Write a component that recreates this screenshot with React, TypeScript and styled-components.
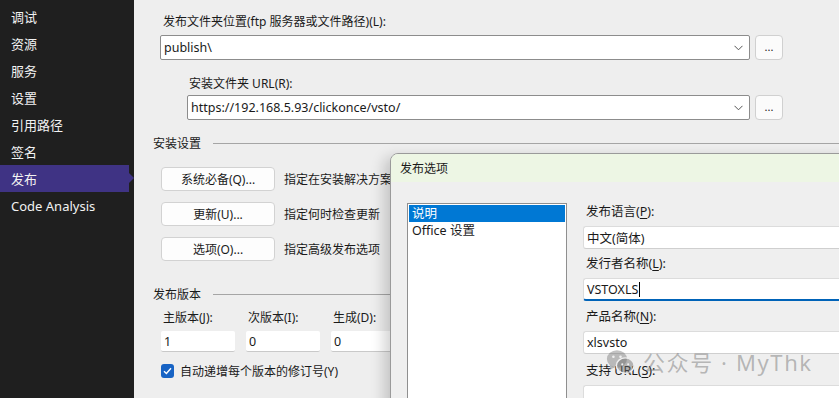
import React from "react";
import styled, { createGlobalStyle } from "styled-components";

const Global = createGlobalStyle`
  html, body { margin: 0; padding: 0; width: 839px; height: 398px; overflow: hidden; background: #eeeeee; }
  * { box-sizing: border-box; }
  body { font-family: "Noto Sans", "Noto Sans CJK SC", sans-serif; font-size: 12px; color: #1a1a1a; }
`;

const Page = styled.div`
  display: flex;
  width: 839px;
  height: 398px;
  overflow: hidden;
`;

const Sidebar = styled.nav`
  width: 134px;
  flex: none;
  background: #1f1f1f;
  display: flex;
  flex-direction: column;
  padding-top: 3px;
`;

const NavItem = styled.div<{ $active?: boolean }>`
  position: relative;
  height: 27px;
  width: 129px;
  display: flex;
  align-items: center;
  padding-left: 11px;
  font-size: 13px;
  color: #f2f2f2;
  background: ${(p) => (p.$active ? "#3f3384" : "transparent")};
  &::after {
    content: "";
    display: ${(p) => (p.$active ? "block" : "none")};
    position: absolute;
    right: -5px;
    top: 8px;
    border-left: 5px solid #3f3384;
    border-top: 5px solid transparent;
    border-bottom: 5px solid transparent;
  }
`;

const Main = styled.main`
  position: relative;
  flex: 1;
  background: #eeeeee;
  padding: 14px 0 0 19px;
  display: flex;
  flex-direction: column;
`;

const FieldLabel = styled.div<{ $indent: number; $top?: number }>`
  margin-left: ${(p) => p.$indent}px;
  margin-top: ${(p) => p.$top ?? 0}px;
  height: 16px;
  line-height: 16px;
`;

const PathRow = styled.div<{ $indent: number; $top: number }>`
  display: flex;
  align-items: center;
  gap: 5px;
  margin-left: ${(p) => p.$indent}px;
  margin-top: ${(p) => p.$top}px;
`;

const Combo = styled.div<{ $w: number }>`
  width: ${(p) => p.$w}px;
  height: 25px;
  background: #ffffff;
  border: 1px solid #8c8c8c;
  border-radius: 2px;
  display: flex;
  align-items: center;
  justify-content: space-between;
  padding: 0 6px 0 3px;
  font-size: 12.5px;
`;

const Browse = styled.div`
  width: 28px;
  height: 25px;
  border: 1px solid #d0d0d0;
  border-radius: 4px;
  background: #fbfbfb;
  display: flex;
  align-items: center;
  justify-content: center;
  font-size: 11px;
  padding-bottom: 3px;
`;

const SectionHead = styled.div<{ $top: number }>`
  display: flex;
  align-items: center;
  gap: 12px;
  margin-top: ${(p) => p.$top}px;
  height: 16px;
  font-size: 12px;
  &::after {
    content: "";
    flex: 1;
    height: 1px;
    background: #a5a5a5;
  }
`;

const ActionList = styled.div`
  display: flex;
  flex-direction: column;
  gap: 11px;
  margin: 16px 0 0 8px;
`;

const ActionRow = styled.div`
  display: flex;
  align-items: center;
  gap: 9px;
`;

const ActionButton = styled.div`
  width: 114px;
  height: 24px;
  background: #fdfdfd;
  border: 1px solid #d2d2d2;
  border-radius: 4px;
  display: flex;
  align-items: center;
  justify-content: center;
`;

const Desc = styled.span`
  white-space: nowrap;
`;

const VersionGrid = styled.div`
  display: grid;
  grid-template-columns: repeat(3, 74px);
  column-gap: 11px;
  row-gap: 5px;
  margin: 8px 0 0 8px;
`;

const VersionLabel = styled.div`
  padding-left: 2px;
  height: 16px;
  line-height: 16px;
`;

const VersionInput = styled.div`
  height: 21px;
  background: #ffffff;
  border-bottom: 1px solid #c9c9c9;
  border-radius: 2px;
  padding-left: 3px;
  display: flex;
  align-items: center;
  font-size: 12.5px;
`;

const CheckRow = styled.div`
  display: flex;
  align-items: center;
  gap: 6px;
  margin: 10px 0 0 8px;
`;

const CheckBox = styled.div`
  width: 13px;
  height: 14px;
  border-radius: 3px;
  background: #1763c4;
  display: flex;
  align-items: center;
  justify-content: center;
`;

const Dialog = styled.section`
  position: absolute;
  left: 256px;
  top: 153px;
  width: 470px;
  height: 300px;
  background: #efefef;
  border: 1px solid #9a9a9a;
  border-radius: 8px 0 0 0;
  box-shadow: -6px 4px 14px rgba(0, 0, 0, 0.18);
  display: flex;
  flex-direction: column;
  overflow: hidden;
`;

const TitleBar = styled.div`
  flex: none;
  height: 28px;
  background: #edf6e4;
  padding-left: 9px;
  display: flex;
  align-items: center;
  font-size: 12px;
`;

const DialogBody = styled.div`
  position: relative;
  flex: 1;
  display: flex;
  align-items: flex-start;
  padding: 21px 0 0 16px;
  gap: 16px;
`;

const ListBox = styled.div`
  flex: none;
  width: 160px;
  height: 240px;
  background: #ffffff;
  border: 1px solid #8f8f8f;
  padding: 1px;
  display: flex;
  flex-direction: column;
`;

const ListItem = styled.div<{ $selected?: boolean }>`
  height: 17px;
  line-height: 17px;
  padding-left: 3px;
  font-size: 12.5px;
  background: ${(p) => (p.$selected ? "#0078d4" : "transparent")};
  color: ${(p) => (p.$selected ? "#ffffff" : "#1a1a1a")};
`;

const FormCol = styled.div`
  flex: 1;
  display: flex;
  flex-direction: column;
`;

const FormLabel = styled.div<{ $top: number }>`
  margin-top: ${(p) => p.$top}px;
  padding-left: 3px;
  height: 16px;
  line-height: 16px;
  font-size: 12.5px;
  u { text-underline-offset: 2px; }
`;

const FormInput = styled.div<{ $focused?: boolean }>`
  margin-top: 6px;
  height: 23px;
  background: #ffffff;
  border: 1px solid #dcdcdc;
  border-bottom: ${(p) => (p.$focused ? "2px solid #0063b8" : "1px solid #cfcfcf")};
  border-right: none;
  border-radius: 3px 0 0 3px;
  padding-left: 3px;
  display: flex;
  align-items: center;
  font-size: 12.5px;
`;

const Caret = styled.span`
  display: inline-block;
  width: 1px;
  height: 15px;
  background: #000;
  margin-left: 1px;
`;

const Watermark = styled.div`
  position: absolute;
  left: 214px;
  top: 167px;
  display: flex;
  align-items: center;
  gap: 7px;
  color: rgba(110, 110, 110, 0.45);
  font-size: 22px;
  line-height: 26px;
  letter-spacing: 1.6px;
  pointer-events: none;
  white-space: nowrap;
`;

const Chevron = () => (
  <svg width="9" height="6" viewBox="0 0 9 6">
    <path d="M0.5 0.8 L4.5 4.8 L8.5 0.8" fill="none" stroke="#555" strokeWidth="1" />
  </svg>
);

const Check = () => (
  <svg width="9" height="8" viewBox="0 0 9 8">
    <path d="M1 4.2 L3.4 6.5 L8 1.3" fill="none" stroke="#fff" strokeWidth="1.4" />
  </svg>
);

const WeChat = () => (
  <svg width="31" height="26" viewBox="0 0 24 22">
    <ellipse cx="9" cy="8.5" rx="8.5" ry="7.5" fill="rgba(110,110,110,0.42)" />
    <path d="M3.5 14 L2.5 18 L7 15.5 Z" fill="rgba(110,110,110,0.42)" />
    <ellipse cx="16" cy="14" rx="7.5" ry="6.5" fill="rgba(110,110,110,0.48)" stroke="#efefef" strokeWidth="1.2" />
    <path d="M20 19 L21.5 21.5 L17.5 20 Z" fill="rgba(110,110,110,0.48)" />
    <circle cx="6" cy="6.5" r="1.1" fill="#efefef" />
    <circle cx="12" cy="6.5" r="1.1" fill="#efefef" />
    <circle cx="13.5" cy="13" r="0.9" fill="#efefef" />
    <circle cx="18.5" cy="13" r="0.9" fill="#efefef" />
  </svg>
);

const navItems = ["调试", "资源", "服务", "设置", "引用路径", "签名", "发布", "Code Analysis"];

const actions = [
  { btn: "系统必备(Q)...", desc: "指定在安装解决方案之前需要安装的必备组件" },
  { btn: "更新(U)...", desc: "指定何时检查更新" },
  { btn: "选项(O)...", desc: "指定高级发布选项" },
];

export default function App() {
  return (
    <Page>
      <Global />
      <Sidebar>
        {navItems.map((n) => (
          <NavItem key={n} $active={n === "发布"}>
            {n}
          </NavItem>
        ))}
      </Sidebar>
      <Main>
        <FieldLabel $indent={10}>发布文件夹位置(ftp 服务器或文件路径)(L):</FieldLabel>
        <PathRow $indent={7} $top={5}>
          <Combo $w={590}>
            <span>publish\</span>
            <Chevron />
          </Combo>
          <Browse>...</Browse>
        </PathRow>
        <FieldLabel $indent={36} $top={16}>安装文件夹 URL(R):</FieldLabel>
        <PathRow $indent={34} $top={3}>
          <Combo $w={563}>
            <span>https://192.168.5.93/clickonce/vsto/</span>
            <Chevron />
          </Combo>
          <Browse>...</Browse>
        </PathRow>
        <SectionHead $top={15}>安装设置</SectionHead>
        <ActionList>
          {actions.map((a) => (
            <ActionRow key={a.btn}>
              <ActionButton>{a.btn}</ActionButton>
              <Desc>{a.desc}</Desc>
            </ActionRow>
          ))}
        </ActionList>
        <SectionHead $top={25}>发布版本</SectionHead>
        <VersionGrid>
          <VersionLabel>主版本(J):</VersionLabel>
          <VersionLabel>次版本(I):</VersionLabel>
          <VersionLabel>生成(D):</VersionLabel>
          <VersionInput>1</VersionInput>
          <VersionInput>0</VersionInput>
          <VersionInput>0</VersionInput>
        </VersionGrid>
        <CheckRow>
          <CheckBox>
            <Check />
          </CheckBox>
          <span>自动递增每个版本的修订号(Y)</span>
        </CheckRow>

        <Dialog>
          <TitleBar>发布选项</TitleBar>
          <DialogBody>
            <ListBox>
              <ListItem $selected>说明</ListItem>
              <ListItem>Office 设置</ListItem>
            </ListBox>
            <FormCol>
              <FormLabel $top={1}>
                发布语言(<u>P</u>):
              </FormLabel>
              <FormInput>中文(简体)</FormInput>
              <FormLabel $top={7}>
                发行者名称(<u>L</u>):
              </FormLabel>
              <FormInput $focused>
                VSTOXLS
                <Caret />
              </FormInput>
              <FormLabel $top={8}>
                产品名称(<u>N</u>):
              </FormLabel>
              <FormInput>xlsvsto</FormInput>
              <FormLabel $top={9}>
                支持 URL(<u>S</u>):
              </FormLabel>
              <FormInput />
            </FormCol>
            <Watermark>
              <WeChat />
              <span>公众号 · MyThk</span>
            </Watermark>
          </DialogBody>
        </Dialog>
      </Main>
    </Page>
  );
}
